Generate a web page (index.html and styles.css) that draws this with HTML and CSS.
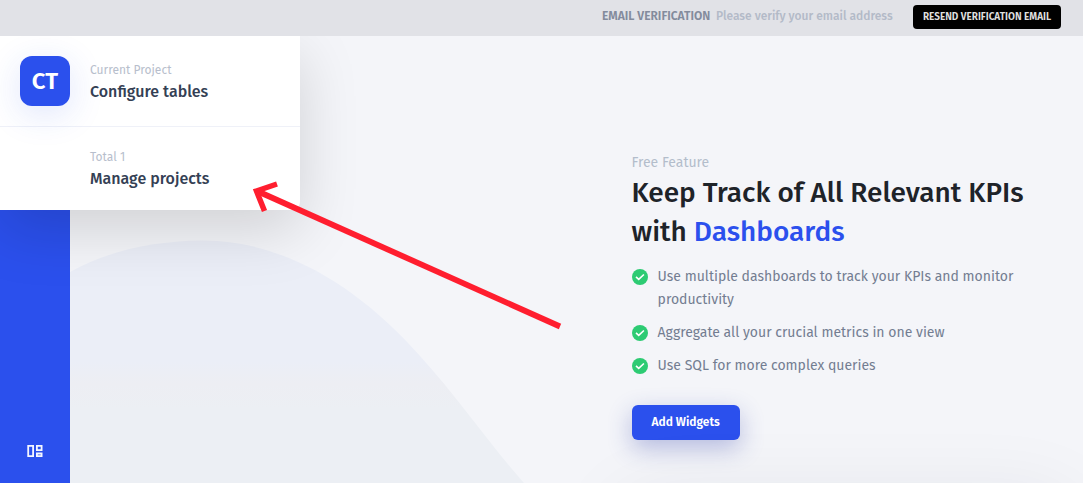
FILE: index.html
```html
<!DOCTYPE html>
<html lang="en">
<head>
<meta charset="utf-8">
<title>Dashboards</title>
<link rel="stylesheet" href="styles.css">
</head>
<body>
<header class="notice">
  <strong class="notice-title">EMAIL VERIFICATION</strong>
  <span class="notice-text">Please verify your email address</span>
  <button class="resend">RESEND VERIFICATION EMAIL</button>
</header>
<div class="shell">
  <nav class="sidebar">
    <svg class="nav-icon" width="16" height="14" viewBox="0 0 16 14" fill="none" stroke="#f4f6ff" stroke-width="1.8"><path d="M1.200 1.900h4.900v10.200h-4.900z"/><path d="M9.900 1.900h4.700v4.200H9.900zM9.900 9.500h4.700v2.600H9.900z"/></svg>
  </nav>
  <main class="main">
    <svg class="hill" width="460" height="250" viewBox="0 0 460 250">
      <defs><linearGradient id="hill" x1="0" y1="0" x2="0" y2="1"><stop offset="0" stop-color="#ebeef7"/><stop offset=".5" stop-color="#ebeef7"/><stop offset=".59" stop-color="#edeef3"/><stop offset=".7" stop-color="#eceff4"/><stop offset="1" stop-color="#eceff4"/></linearGradient></defs>
      <path fill="url(#hill)" d="M0 39C38 18 82 8 132 7.500C214 7 290 55 350 123C389 166 421 213 454 250H0Z"/>
    </svg>
    <section class="feature">
      <p class="eyebrow">Free Feature</p>
      <h1 class="headline">Keep Track of All Relevant KPIs<br>with <em>Dashboards</em></h1>
      <ul class="benefits">
        <li><svg class="check" viewBox="0 0 16 16"><circle cx="8" cy="8" r="8"/><path d="M4 7.900l2.700 2.500 5.200-4.900"/></svg><p>Use multiple dashboards to track your KPIs and monitor<br>productivity</p></li>
        <li><svg class="check" viewBox="0 0 16 16"><circle cx="8" cy="8" r="8"/><path d="M4 7.900l2.700 2.500 5.200-4.900"/></svg><p>Aggregate all your crucial metrics in one view</p></li>
        <li><svg class="check" viewBox="0 0 16 16"><circle cx="8" cy="8" r="8"/><path d="M4 7.900l2.700 2.500 5.200-4.900"/></svg><p>Use SQL for more complex queries</p></li>
      </ul>
      <button class="add">Add Widgets</button>
    </section>
    <div class="dock-shade"></div>
  </main>
</div>
<aside class="projects">
  <div class="project current">
    <div class="avatar">CT</div>
    <div><p class="label">Current Project</p><p class="name">Configure tables</p></div>
  </div>
  <div class="project manage">
    <div><p class="label">Total 1</p><p class="name">Manage projects</p></div>
  </div>
</aside>
<svg class="arrow" width="1083" height="483" viewBox="0 0 1083 483" fill="none" stroke="#ff1e2f"><path stroke-width="5.800" d="M257 191L560 326.500"/><path stroke-width="5.500" d="M277 184L256.500 191L264.500 211"/></svg>
</body>
</html>
```
FILE: styles.css
```css
* { box-sizing: border-box; }
body { margin: 0; height: 483px; overflow: hidden; background: #f4f5f9; font-family: "Fira Sans", "Noto Sans", sans-serif; white-space: nowrap; }
p, h1, ul { margin: 0; padding: 0; }
button { border: 0; padding: 0; font-family: inherit; color: #fff; }
.notice { height: 36px; background: #e1e2e7; display: flex; justify-content: flex-end; align-items: flex-start; padding: 5px 22px 0 0; font-size: 12px; line-height: 22px; }
.notice-title { width: 109px; margin-right: 5px; color: #838b9c; font-weight: 600; }
.notice-text { width: 178px; margin-right: 19px; color: #b3bac8; font-weight: 500; }
.resend { width: 148px; height: 24px; border-radius: 4px; background: #000; color: #e0e0e0; font-size: 10px; font-weight: 600; }
.shell { height: 447px; display: grid; grid-template-columns: 70px 1fr; }
.sidebar { background: #2b50ed; display: flex; align-items: flex-end; justify-content: center; padding-bottom: 25px; }
.main { display: grid; grid-template-columns: 561.6px 1fr; position: relative; overflow: hidden; }
.hill { align-self: end; }
.feature { padding-top: 115px; position: relative; }
.eyebrow { padding-top: 1px; font-size: 14px; line-height: 21px; color: #b3bdcb; }
.headline { font-size: 28px; line-height: 39px; font-weight: 500; color: #1e2329; }
.headline em { color: #2b50ed; font-style: normal; }
.benefits { list-style: none; display: grid; gap: 10px; margin-top: 14px; font-size: 14px; line-height: 23px; color: #737d91; }
.benefits li { display: flex; gap: 10px; }
.check { width: 16px; height: 16px; margin-top: 4px; fill: #2dcb73; }
.check path { fill: none; stroke: #fff; stroke-width: 1.6; }
.add { display: block; width: 108px; height: 35px; padding-bottom: 1px; margin-top: 28px; border-radius: 6px; background: #2b50ed; box-shadow: 0 8px 24px rgba(48, 62, 170, .32); font-size: 12px; font-weight: 600; }
.dock-shade { position: absolute; left: 550px; right: 10px; top: 462px; height: 100px; border-radius: 30px; box-shadow: 0 0 80px rgba(30, 35, 45, .08); }
.projects { position: absolute; left: 0; top: 36px; width: 300px; height: 174px; background: #fff; border-radius: 0 0 8px; box-shadow: 0 20px 60px rgba(0, 0, 0, .15); clip-path: inset(0 -120px -120px 0); }
.project { display: flex; align-items: center; }
.current { height: 91px; padding: 0 20px 1px; gap: 20px; border-bottom: 1px solid #eff1f8; }
.current .label { line-height: 20px; }
.current .name { line-height: 23px; padding-bottom: 0; }
.current .label { padding-top: 1px; }
.manage { height: 83px; padding: 2px 0 0 90px; }
.avatar { width: 50px; height: 50px; border-radius: 12px; background: #2b50ed; color: #fff; font-size: 24px; line-height: 50px; font-weight: 600; text-align: center; box-shadow: 0 8px 35px rgba(43, 80, 237, .15); }
.label { font-size: 12px; line-height: 19px; color: #b7becc; }
.name { font-size: 16px; line-height: 24px; font-weight: 500; color: #344054; }
.arrow { position: absolute; left: 0; top: 0; }
```
